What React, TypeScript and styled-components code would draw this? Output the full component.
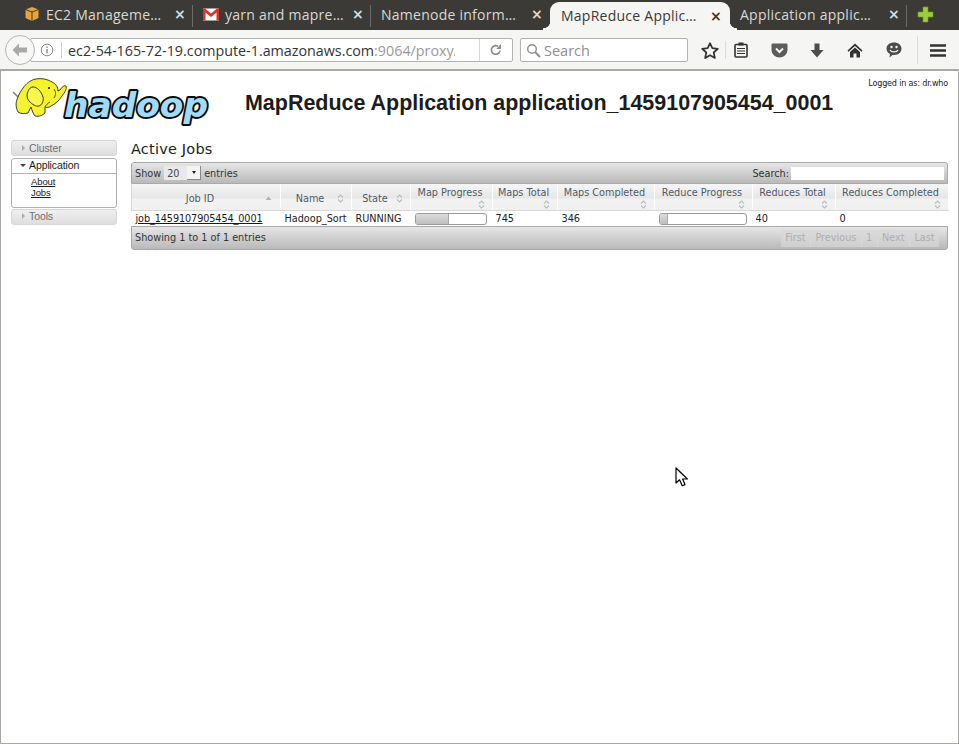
import React from "react";
import styled, { createGlobalStyle } from "styled-components";

const Global = createGlobalStyle`
  html, body { margin: 0; padding: 0; background: #fff; }
  #root { width: 959px; height: 744px; overflow: hidden; }
`;

const Window = styled.div`
  position: relative;
  width: 959px;
  height: 744px;
  display: flex;
  flex-direction: column;
  overflow: hidden;
  font-family: "Open Sans", "Noto Sans", sans-serif;
`;

const TabBar = styled.div`
  height: 30px;
  flex: none;
  background: #3c3a36;
  display: flex;
  align-items: flex-end;
  padding-left: 14px;
`;

const Tab = styled.div<{ $sep?: boolean; $w: number }>`
  width: ${(p) => p.$w}px;
  height: 30px;
  flex: none;
  box-sizing: border-box;
  display: flex;
  align-items: center;
  padding: 0 9px 2px 10px;
  color: #d8d8d4;
  position: relative;
  font-size: 14px;
  letter-spacing: 0.25px;
  white-space: nowrap;
  &::after {
    content: "";
    display: ${(p) => (p.$sep ? "block" : "none")};
    position: absolute;
    right: 0;
    top: 5px;
    height: 22px;
    width: 1px;
    background: #6d6b67;
  }
`;

const ActiveTab = styled(Tab)`
  height: 28px;
  color: #3c3a36;
  background: #f5f5f4;
  border-radius: 9px 9px 0 0;
  padding: 0 10px 1px 11px;
  &::before,
  &::after {
    content: "";
    display: block;
    position: absolute;
    top: auto;
    bottom: 0;
    width: 7px;
    height: 9px;
  }
  &::before {
    left: -7px;
    right: auto;
    background: radial-gradient(circle at 0 0, transparent 7px, #f5f5f4 7.6px);
  }
  &::after {
    right: -7px;
    left: auto;
    background: radial-gradient(circle at 100% 0, transparent 7px, #f5f5f4 7.6px);
  }
`;

const TabIcon = styled.span`
  width: 16px;
  height: 16px;
  margin-right: 6px;
  flex: none;
  display: flex;
  align-items: center;
  justify-content: center;
`;

const TabTitle = styled.span`
  flex: 1;
  min-width: 0;
`;

const Close = styled.span`
  flex: none;
  margin-left: 2px;
  font-size: 14px;
  font-weight: 700;
  font-family: "DejaVu Sans", sans-serif;
  width: 10px;
  text-align: center;
`;

const AddTab = styled.div`
  margin-left: 10px;
  height: 30px;
  display: flex;
  align-items: center;
  padding-bottom: 2px;
  box-sizing: border-box;
`;

const Toolbar = styled.div`
  height: 41px;
  flex: none;
  background: #f5f5f4;
  border-bottom: 2px solid #a8a8a6;
  box-sizing: border-box;
  display: flex;
  align-items: center;
  position: relative;
  padding: 1px 0 0 5px;
`;

const BackButton = styled.div`
  width: 30px;
  height: 30px;
  border-radius: 50%;
  border: 1px solid #b5b5b3;
  background: #f7f7f6;
  box-sizing: border-box;
  flex: none;
  display: flex;
  align-items: center;
  justify-content: center;
  position: relative;
  z-index: 1;
`;

const UrlBar = styled.div`
  width: 483px;
  margin-left: -5px;
  height: 24px;
  flex: none;
  box-sizing: border-box;
  background: #fff;
  border: 1px solid #b3b3b1;
  border-radius: 2px;
  display: flex;
  align-items: center;
  padding-left: 9px;
  font-size: 14.3px;
  color: #333;
`;

const InfoDivider = styled.span`
  width: 1px;
  height: 16px;
  background: #d0d0ce;
  margin: 0 5px 0 7px;
  flex: none;
`;

const UrlText = styled.span`
  width: 387px;
  margin-left: 1px;
  overflow: hidden;
  white-space: nowrap;
  flex: none;
`;

const UrlMuted = styled.span`
  color: #9a9a98;
`;

const Reload = styled.div`
  margin-left: auto;
  width: 33px;
  height: 100%;
  flex: none;
  border-left: 1px solid #d8d8d6;
  box-sizing: border-box;
  display: flex;
  align-items: center;
  justify-content: center;
`;

const SearchBar = styled.div`
  width: 168px;
  height: 24px;
  margin-left: 7px;
  flex: none;
  box-sizing: border-box;
  background: #fff;
  border: 1px solid #b3b3b1;
  border-radius: 2px;
  display: flex;
  align-items: center;
  padding-left: 5px;
  gap: 3px;
  font-size: 14.5px;
  color: #8f8f8d;
`;

const Tools = styled.div`
  display: flex;
  align-items: center;
  flex: 1;
  height: 100%;
`;

const ToolSlot = styled.span<{ $ml: number }>`
  width: 18px;
  margin-left: ${(p) => p.$ml}px;
  flex: none;
  display: flex;
  align-items: center;
  justify-content: center;
`;

const ToolSep = styled.span<{ $h: number; $ml: number }>`
  width: 1px;
  height: ${(p) => p.$h}px;
  margin-left: ${(p) => p.$ml}px;
  background: #dcdcda;
  flex: none;
`;

const Page = styled.div`
  flex: 1;
  box-sizing: border-box;
  border-left: 1px solid #a8a8a6;
  border-right: 1px solid #a8a8a6;
  border-bottom: 1px solid #a8a8a6;
  background: #fff;
  padding: 0 10px;
  color: #222;
`;

const Masthead = styled.div`
  height: 69px;
  display: flex;
  align-items: flex-start;
  position: relative;
`;

const Logo = styled.svg`
  width: 200px;
  height: 50px;
  margin: 6px 0 0 1px;
  flex: none;
`;

const Title = styled.h1`
  margin: 18px 0 0 33px;
  font: 700 21.46px/28px "Liberation Sans", Arial, sans-serif;
  color: #1c1c1c;
  white-space: nowrap;
`;

const Logged = styled.div`
  position: absolute;
  right: 0;
  top: 6px;
  font: 8.1px/12px "DejaVu Sans", sans-serif;
  color: #222;
  letter-spacing: -0.2px;
`;

const Columns = styled.div`
  display: flex;
  align-items: flex-start;
`;

const Side = styled.div`
  width: 106px;
  flex: none;
  display: flex;
  flex-direction: column;
  font: 10px/14px "Liberation Sans", Arial, sans-serif;
  letter-spacing: -0.1px;
`;

const Closed = styled.div<{ $pb?: number }>`
  height: 16px;
  box-sizing: border-box;
  border: 1px solid #d6d6d6;
  border-radius: 3px;
  background: linear-gradient(#f0f0f0, #dedede);
  color: #6f6f6f;
  display: flex;
  align-items: center;
  padding: 0 0 ${(p) => p.$pb ?? 1}px 10px;
  margin-bottom: 1px;
  font-size: 10.5px;
`;

const OpenBox = styled.div`
  height: 50px;
  margin: 1px 0;
  box-sizing: border-box;
  border: 1px solid #b0b0b0;
  border-radius: 3px;
  background: #fff;
`;

const OpenHead = styled.div`
  height: 15px;
  box-sizing: border-box;
  border-bottom: 1px solid #b0b0b0;
  display: flex;
  align-items: center;
  padding: 0 0 2px 8px;
  color: #1a1a1a;
  font-size: 10.5px;
`;

const ArrowR = styled.span`
  width: 0;
  height: 0;
  border-left: 3px solid #aaa;
  border-top: 3px solid transparent;
  border-bottom: 3px solid transparent;
  margin-right: 4px;
`;

const ArrowD = styled.span`
  width: 0;
  height: 0;
  border-top: 3px solid #444;
  border-left: 3px solid transparent;
  border-right: 3px solid transparent;
  margin-right: 3px;
`;

const SideLinks = styled.div`
  display: flex;
  flex-direction: column;
  padding: 2px 0 0 19px;
  line-height: 11px;
  font-size: 9.5px;
`;

const SideLink = styled.a`
  color: #1a1a1a;
  text-decoration: underline;
`;

const Main = styled.div`
  flex: 1;
  margin-left: 14px;
  margin-top: -2px;
  min-width: 0;
`;

const Heading = styled.h3`
  margin: 0;
  height: 24px;
  font: 400 14.5px/22px "DejaVu Sans", sans-serif;
  color: #222;
  letter-spacing: 0.2px;
`;

const Wrap = styled.div`
  width: 817px;
  font: 9.7px/13px "DejaVu Sans", sans-serif;
  color: #222;
`;

const Bar = styled.div<{ $top?: boolean }>`
  height: ${(p) => (p.$top ? 22 : 24)}px;
  box-sizing: border-box;
  background: linear-gradient(#e6e6e6, #b9b9b9);
  border: 1px solid #aaa;
  border-radius: ${(p) => (p.$top ? "3px 3px 0 0" : "0 0 3px 3px")};
  display: flex;
  align-items: center;
  justify-content: space-between;
  padding: 0 3px;
  color: #333;
`;

const FakeSelect = styled.span`
  display: inline-flex;
  align-items: center;
  width: 37px;
  height: 14px;
  margin: 0 3px;
  background: #e9e9e9;
  box-sizing: border-box;
  padding-left: 3px;
  position: relative;
  color: #444;
`;

const SelectBtn = styled.span`
  position: absolute;
  right: 0;
  top: 0;
  width: 13px;
  height: 13px;
  background: #f4f4f4;
  border-right: 1px solid #888;
  border-bottom: 1px solid #888;
  display: flex;
  align-items: center;
  justify-content: center;
  &::after {
    content: "";
    border-top: 3px solid #222;
    border-left: 2.5px solid transparent;
    border-right: 2.5px solid transparent;
  }
`;

const SearchBox = styled.span`
  display: flex;
  align-items: center;
  gap: 2px;
`;

const SearchInput = styled.span`
  width: 153px;
  height: 13px;
  background: #fff;
  display: block;
`;

const Table = styled.table`
  width: 817px;
  table-layout: fixed;
  border-collapse: collapse;
  border-spacing: 0;
`;

const Th = styled.th`
  height: 26px;
  padding: 0;
  font-weight: 400;
  color: #4f5b68;
  position: relative;
  border-right: 1px solid #fff;
  box-sizing: border-box;
  background: linear-gradient(#f4f4f4 0, #f4f4f4 2px, #e6e6e6 14px, #f2f2f2 15px, #f0f0f0 100%);
  border-bottom: 1px solid #d8d8d8;
  border-left: 1px solid #d6d6d6;
  vertical-align: top;
`;

const ThInner = styled.div<{ $tall?: boolean; $pad: number }>`
  display: flex;
  flex-direction: column;
  align-items: center;
  padding-top: ${(p) => (p.$tall ? 2 : 8)}px;
  padding-right: ${(p) => p.$pad}px;
  white-space: nowrap;
`;

const SortIcon = styled.svg<{ $low?: boolean; $right?: number }>`
  position: absolute;
  right: ${(p) => p.$right ?? 7}px;
  bottom: ${(p) => (p.$low ? 1 : 7)}px;
  width: 7px;
  height: 9px;
`;

const Td = styled.td<{ $pl?: number }>`
  height: 15px;
  padding: 0 0 0 ${(p) => p.$pl ?? 4}px;
  background: #fff;
  white-space: nowrap;
  color: #222;
  overflow: hidden;
`;

const JobLink = styled.a`
  color: #1a1a1a;
  text-decoration: underline;
  letter-spacing: -0.1px;
`;

const Progress = styled.div<{ $w: number }>`
  width: ${(p) => p.$w}px;
  height: 12px;
  border: 1px solid #9a9a9a;
  border-radius: 3px;
  box-sizing: border-box;
  background: #fff;
  overflow: hidden;
  margin: 1px 0 0;
`;

const ProgressFill = styled.div`
  height: 100%;
  background: linear-gradient(#dcdcdc, #bdbdbd);
  border-right: 1px solid #aaa;
`;

const Pager = styled.div`
  display: flex;
  align-items: center;
  margin-right: 5px;
  color: #aeaeae;
  height: 18px;
  background: linear-gradient(#dcdcdc, #cfcfcf);
`;

const PageBtn = styled.span`
  padding: 0 4.4px;
  border-right: 1px solid #d8d8d8;
  line-height: 18px;
  &:last-child { border-right: 0; }
`;

const Cursor = styled.svg`
  position: absolute;
  left: 675px;
  top: 467px;
  width: 14px;
  height: 21px;
`;

const Sort = ({ low }: { low?: boolean }) => (
  <SortIcon $low={low} viewBox="0 0 7 9">
    <path d="M1 3.5 L3.5 1 L6 3.5 M1 5.5 L3.5 8 L6 5.5" fill="none" stroke="#b8bcc0" strokeWidth="1.1" />
  </SortIcon>
);

const SortUp = () => (
  <SortIcon $right={8} viewBox="0 0 7 9">
    <path d="M0.5 6 L3.5 2.5 L6.5 6 Z" fill="#b4b4b4" />
  </SortIcon>
);

const cols = [149, 71, 59, 82, 65, 97, 98, 83, 113];

const Head = ({ label, tall, sorted }: { label: string; tall?: boolean; sorted?: boolean }) => (
  <Th>
    <ThInner $tall={tall} $pad={tall ? 3 : 12}>{label}</ThInner>
    {sorted ? <SortUp /> : <Sort low={tall} />}
  </Th>
);

const AwsIcon = () => (
  <svg width="16" height="16" viewBox="0 0 16 16">
    <path d="M8 1 L14.5 3.5 V12 L8 15 L1.5 12 V3.5 Z" fill="#e8a33d" />
    <path d="M1.5 3.5 L8 6 L14.5 3.5 M8 6 V15" fill="none" stroke="#3c3a36" strokeWidth="1" />
  </svg>
);

const GmailIcon = () => (
  <svg width="16" height="13" viewBox="0 0 16 13">
    <rect x="0" y="0.5" width="16" height="12" fill="#fff" />
    <path d="M0 0.5 H2 L8 5.5 L14 0.5 H16 V12.5 H13.5 V4.5 L8 9 L2.5 4.5 V12.5 H0 Z" fill="#d8342c" />
  </svg>
);

const Elephant = () => (
  <g>
    <path d="M1 15 L6 20" stroke="#8a8a60" strokeWidth="1.6" />
    <path
      d="M6 20 C3 26 4 31 6 35 C9 37 13 37 16 36 L19 30 C20 33 21 37 23 39 C27 40 31 38 33 36 L33 30 C36 31 38 30 39 29 C43 27 47 24 50 19 C53 15 55 12 54 9 C52 8 50 10 48 13 L46 14 C46 10 44 7 40 5 C35 2 29 1 24 2 C18 3 14 7 11 11 C9 14 7 17 6 20 Z"
      fill="#f6f22e"
      stroke="#2a2a10"
      strokeWidth="0.9"
    />
    <path d="M15 18 C16 13 18 10 21 10 C25 10 29 14 31 20 C32 24 30 28 27 29 C24 30 20 27 18 25 C16 23 15 21 15 18 Z" fill="#f9f650" stroke="#2a2a10" strokeWidth="0.9" />
    <path d="M33 30 C34 28 36 26 38 25 M42 12 C44 15 44 18 42 21" fill="none" stroke="#2a2a10" strokeWidth="0.8" />
    <circle cx="37" cy="11" r="1" fill="#111" />
  </g>
);

const Cmd = ({ children, w = 18, h = 18 }: { children: React.ReactNode; w?: number; h?: number }) => (
  <svg width={w} height={h} viewBox={`0 0 ${w} ${h}`}>{children}</svg>
);

export default function App() {
  return (
    <Window>
      <Global />
      <TabBar>
        <Tab $w={179} $sep>
          <TabIcon><AwsIcon /></TabIcon>
          <TabTitle>EC2 Manageme…</TabTitle>
          <Close>×</Close>
        </Tab>
        <Tab $w={178} $sep>
          <TabIcon><GmailIcon /></TabIcon>
          <TabTitle>yarn and mapre…</TabTitle>
          <Close>×</Close>
        </Tab>
        <Tab $w={179}>
          <TabTitle>Namenode inform…</TabTitle>
          <Close>×</Close>
        </Tab>
        <ActiveTab $w={180}>
          <TabTitle>MapReduce Applic…</TabTitle>
          <Close>×</Close>
        </ActiveTab>
        <Tab $w={177} $sep>
          <TabTitle>Application applic…</TabTitle>
          <Close>×</Close>
        </Tab>
        <AddTab>
          <svg width="17" height="17" viewBox="0 0 17 17">
            <path d="M6 1 H11 V6 H16 V11 H11 V16 H6 V11 H1 V6 H6 Z" fill="#9ccc3c" stroke="#6f9a2a" strokeWidth="0.6" />
          </svg>
        </AddTab>
      </TabBar>
      <Toolbar>
        <BackButton>
          <svg width="16" height="14" viewBox="0 0 16 14">
            <path d="M7 0.5 L0.5 7 L7 13.5 V9.5 H15 V4.5 H7 Z" fill="#a9a9a7" />
          </svg>
        </BackButton>
        <UrlBar>
          <svg width="14" height="14" viewBox="0 0 14 14">
            <circle cx="7" cy="7" r="5.8" fill="none" stroke="#8a8a88" strokeWidth="1" />
            <path d="M7 6 V10.5 M7 3.4 V5" stroke="#8a8a88" strokeWidth="1.4" />
          </svg>
          <InfoDivider />
          <UrlText>
            ec2-54-165-72-19.compute-1.amazonaws.com<UrlMuted>:9064/proxy/</UrlMuted>
          </UrlText>
          <Reload>
            <svg width="14" height="14" viewBox="0 0 14 14">
              <path d="M11 7.5 A4.3 4.3 0 1 1 9 3.3" fill="none" stroke="#8d8d8b" strokeWidth="1.7" />
              <path d="M12 1 V6 H7.2 Z" fill="#8d8d8b" />
            </svg>
          </Reload>
        </UrlBar>
        <SearchBar>
          <svg width="15" height="15" viewBox="0 0 15 15">
            <circle cx="6" cy="6" r="4.3" fill="none" stroke="#8f8f8d" strokeWidth="1.4" />
            <path d="M9.2 9.2 L14 14" stroke="#8f8f8d" strokeWidth="2" />
          </svg>
          Search
        </SearchBar>
        <Tools>
          <ToolSlot $ml={13}>
            <svg width="18" height="17" viewBox="0 0 18 17">
              <path d="M9 1.2 L11.3 6.2 L16.8 6.8 L12.7 10.5 L13.9 16 L9 13.2 L4.1 16 L5.3 10.5 L1.2 6.8 L6.7 6.2 Z" fill="none" stroke="#333" strokeWidth="1.7" strokeLinejoin="round" />
            </svg>
          </ToolSlot>
          <ToolSep $h={18} $ml={6} />
          <ToolSlot $ml={6}>
            <Cmd w={14} h={16}>
              <rect x="1" y="2.5" width="12" height="12.5" rx="1" fill="none" stroke="#333" strokeWidth="1.6" />
              <rect x="4.5" y="0.5" width="5" height="3" fill="#333" />
              <path d="M3 6.5 H11 M3 9 H11 M3 11.5 H11" stroke="#333" strokeWidth="1.2" />
            </Cmd>
          </ToolSlot>
          <ToolSlot $ml={20}>
            <Cmd w={17} h={15}>
              <path d="M1.5 0.5 H15.5 A1 1 0 0 1 16.5 1.5 V7 A8 7.5 0 0 1 0.5 7 V1.5 A1 1 0 0 1 1.5 0.5 Z" fill="#5c5c5a" />
              <path d="M5 5.5 L8.5 9 L12 5.5" fill="none" stroke="#f5f5f4" strokeWidth="2" />
            </Cmd>
          </ToolSlot>
          <ToolSlot $ml={20}>
            <Cmd w={14} h={15}>
              <path d="M4.5 0.5 H9.5 V7 H13.5 L7 14.5 L0.5 7 H4.5 Z" fill="#4d4d4b" />
            </Cmd>
          </ToolSlot>
          <ToolSlot $ml={20}>
            <Cmd w={16} h={15}>
              <path d="M8 0.5 L15.5 7.5 L14.5 8.8 L8 3 L1.5 8.8 L0.5 7.5 Z" fill="#333" />
              <path d="M8 4.5 L13 9 V14.5 H9.5 V10.5 H6.5 V14.5 H3 V9 Z" fill="#333" />
            </Cmd>
          </ToolSlot>
          <ToolSlot $ml={21}>
            <Cmd w={16} h={16}>
              <path d="M8 0.5 C12.5 0.5 15.5 3.2 15.5 6.8 C15.5 10.4 12.5 13 8 13 L6.5 13 L3.5 15.5 L4 12 C1.8 11 0.5 9 0.5 6.8 C0.5 3.2 3.5 0.5 8 0.5 Z" fill="#4d4d4b" />
              <circle cx="5.5" cy="5" r="1.2" fill="#f5f5f4" />
              <circle cx="10.5" cy="5" r="1.2" fill="#f5f5f4" />
              <path d="M4 8 C5.5 10.5 10.5 10.5 12 8" fill="none" stroke="#f5f5f4" strokeWidth="1.3" />
            </Cmd>
          </ToolSlot>
          <ToolSep $h={28} $ml={14} />
          <ToolSlot $ml={11}>
            <Cmd w={16} h={13}>
              <path d="M0 1.5 H16 M0 6.5 H16 M0 11.5 H16" stroke="#333" strokeWidth="2.4" />
            </Cmd>
          </ToolSlot>
        </Tools>
      </Toolbar>
      <Page>
        <Masthead>
          <Logo viewBox="0 0 200 50">
            <Elephant />
            <text
              x="52"
              y="40"
              fontFamily="DejaVu Sans, sans-serif"
              fontWeight="700"
              fontStyle="italic"
              fontSize="34"
              textLength="144"
              lengthAdjust="spacingAndGlyphs"
              fill="#9fdcfb"
              stroke="#0a0a0a"
              strokeWidth="3.8"
              strokeLinejoin="round"
              paintOrder="stroke"
            >
              hadoop
            </text>
          </Logo>
          <Title>MapReduce Application application_1459107905454_0001</Title>
          <Logged>Logged in as: dr.who</Logged>
        </Masthead>
        <Columns>
          <Side>
            <Closed><ArrowR />Cluster</Closed>
            <OpenBox>
              <OpenHead><ArrowD />Application</OpenHead>
              <SideLinks>
                <SideLink>About</SideLink>
                <SideLink>Jobs</SideLink>
              </SideLinks>
            </OpenBox>
            <Closed $pb={2}><ArrowR />Tools</Closed>
          </Side>
          <Main>
            <Heading>Active Jobs</Heading>
            <Wrap>
              <Bar $top>
                <span>
                  Show
                  <FakeSelect>20<SelectBtn /></FakeSelect>
                  entries
                </span>
                <SearchBox>
                  Search:
                  <SearchInput />
                </SearchBox>
              </Bar>
              <Table>
                <colgroup>
                  {cols.map((c, i) => <col key={i} style={{ width: c }} />)}
                </colgroup>
                <thead>
                  <tr>
                    <Head label="Job ID" sorted />
                    <Head label="Name" />
                    <Head label="State" />
                    <Head label="Map Progress" tall />
                    <Head label="Maps Total" tall />
                    <Head label="Maps Completed" tall />
                    <Head label="Reduce Progress" tall />
                    <Head label="Reduces Total" tall />
                    <Head label="Reduces Completed" tall />
                  </tr>
                </thead>
                <tbody>
                  <tr>
                    <Td><JobLink>job_1459107905454_0001</JobLink></Td>
                    <Td>Hadoop_Sort</Td>
                    <Td>RUNNING</Td>
                    <Td><Progress $w={72}><ProgressFill style={{ width: `${(346 / 745) * 100}%` }} /></Progress></Td>
                    <Td $pl={3}>745</Td>
                    <Td>346</Td>
                    <Td><Progress $w={88}><ProgressFill style={{ width: "9%" }} /></Progress></Td>
                    <Td $pl={3}>40</Td>
                    <Td>0</Td>
                  </tr>
                </tbody>
              </Table>
              <Bar>
                <span>Showing 1 to 1 of 1 entries</span>
                <Pager>
                  <PageBtn>First</PageBtn>
                  <PageBtn>Previous</PageBtn>
                  <PageBtn>1</PageBtn>
                  <PageBtn>Next</PageBtn>
                  <PageBtn>Last</PageBtn>
                </Pager>
              </Bar>
            </Wrap>
          </Main>
        </Columns>
      </Page>
      <Cursor viewBox="0 0 14 21">
        <path d="M1 1 V16 L4.6 12.8 L7.2 18.8 L10 17.6 L7.6 12 L12.4 12 Z" fill="#fff" stroke="#000" strokeWidth="1.2" strokeLinejoin="round" />
      </Cursor>
    </Window>
  );
}
